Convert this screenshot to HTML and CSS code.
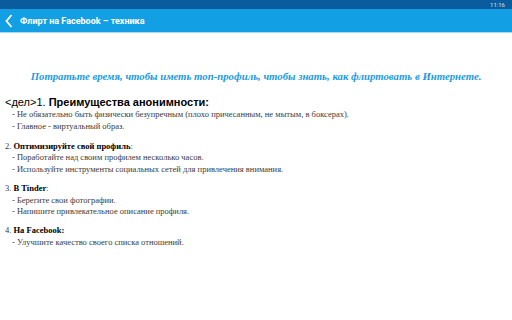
FILE: index.html
```html
<!DOCTYPE html>
<html lang="ru">
<head>
    <meta charset="UTF-8">
    <title>Флирт на Facebook – техника</title>
    <link rel="stylesheet" href="styles.css">
</head>
<body>
    <div class="statusbar">
        <span class="clock">11:16</span>
    </div>
    <div class="appbar">
        <svg class="back" width="8" height="14" viewBox="0 0 8 14">
            <path d="M6.5 1 L1.5 7 L6.5 13" fill="none" stroke="#fff" stroke-width="1.8"/>
        </svg>
        <span class="title">Флирт на Facebook – техника</span>
    </div>
    <div class="content">
        <p class="lead">Потратьте время, чтобы иметь топ-профиль, чтобы знать, как флиртовать в Интернете.</p>
        <div class="intro">&lt;дел&gt;1. <b>Преимущества анонимности:</b></div>
        <div class="section first">
            <div class="item">- Не обязательно быть физически безупречным (плохо причесанным, не мытым, в боксерах).</div>
            <div class="item">- Главное - виртуальный образ.</div>
        </div>
        <div class="section">
            <div>2. <b>Оптимизируйте свой профиль</b>:</div>
            <div class="item">- Поработайте над своим профилем несколько часов.</div>
            <div class="item">- Используйте инструменты социальных сетей для привлечения внимания.</div>
        </div>
        <div class="section">
            <div>3. <b>В Tinder</b>:</div>
            <div class="item">- Берегите свои фотографии.</div>
            <div class="item">- Напишите привлекательное описание профиля.</div>
        </div>
        <div class="section">
            <div>4. <b>На Facebook:</b></div>
            <div class="item">- Улучшите качество своего списка отношений.</div>
        </div>
    </div>
</body>
</html>
```
FILE: styles.css
```css
:root {
    --status-bg: #0b5b9f;
    --bar-bg: #129fe4;
    --bar-line: #a9d9f2;
    --lead: #1b9be2;
    --text: #3a3a3a;
}
html, body {
    margin: 0;
    padding: 0;
    background: #fff;
    width: 512px;
    height: 320px;
    overflow: hidden;
}
.statusbar {
    height: 9px;
    background: var(--status-bg);
    display: flex;
    justify-content: flex-end;
    align-items: center;
    padding-right: 7px;
}
.clock {
    font-family: 'Roboto', sans-serif;
    font-size: 6px;
    color: #cfe3f2;
}
.appbar {
    height: 23px;
    background: var(--bar-bg);
    border-bottom: 1px solid var(--bar-line);
    display: flex;
    align-items: center;
    padding-left: 5px;
}
.back {
    margin-right: 7px;
}
.title {
    font-family: 'Roboto', sans-serif;
    font-weight: 700;
    font-size: 9px;
    color: #fff;
}
.content {
    padding: 0 5px;
    font-family: 'Liberation Serif', serif;
    font-size: 8.5px;
    line-height: 11.6px;
    color: var(--text);
}
.lead {
    margin: 36px 0 0 0;
    text-align: center;
    font-family: 'Liberation Serif', serif;
    font-style: italic;
    font-weight: 700;
    font-size: 10.75px;
    line-height: 14px;
    color: var(--lead);
    white-space: nowrap;
}
.intro {
    margin-top: 12px;
    font-family: 'Liberation Sans', sans-serif;
    font-size: 11px;
    line-height: 14px;
    color: #000;
}
.section {
    margin-bottom: 7.5px;
}
.section.first {
    margin-bottom: 8.5px;
}
.section b {
    color: #000;
}
.item {
    padding-left: 7px;
}
```
